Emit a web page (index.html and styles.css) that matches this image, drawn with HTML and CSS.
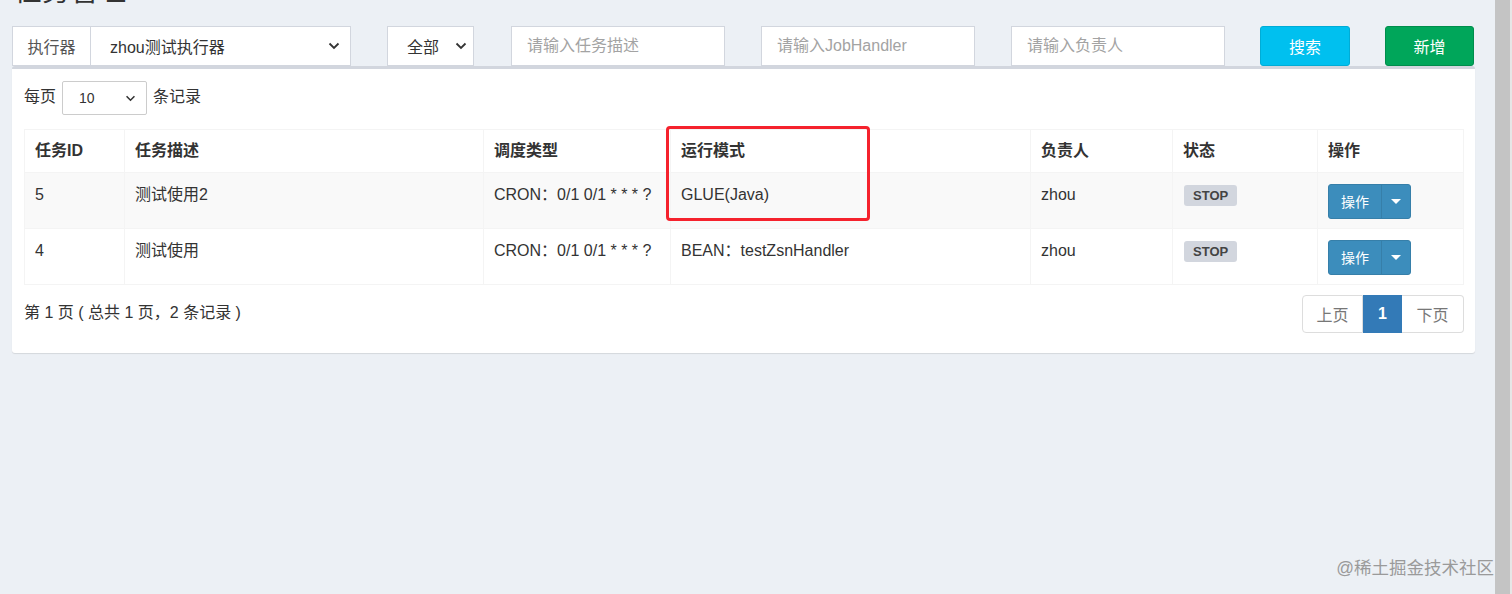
FILE: index.html
```html
<!DOCTYPE html>
<html lang="zh-CN">
<head>
    <meta charset="UTF-8">
    <meta name="viewport" content="width=device-width, initial-scale=1.0">
    <title>任务管理</title>
    <link rel="stylesheet" href="styles.css">
</head>
<body>
    <div class="page">
        <div class="content">
            <h1 class="page-title">任务管理</h1>

            <div class="filters">
                <div class="group">
                    <span class="addon">执行器</span>
                    <div class="select select-group">
                        <span>zhou测试执行器</span>
                        <svg width="12" height="8" viewBox="0 0 12 8"><path d="M1.5 1.5 6 6l4.5-4.5" fill="none" stroke="#333" stroke-width="1.8"/></svg>
                    </div>
                </div>
                <div class="select select-status">
                    <span>全部</span>
                    <svg width="12" height="8" viewBox="0 0 12 8"><path d="M1.5 1.5 6 6l4.5-4.5" fill="none" stroke="#333" stroke-width="1.8"/></svg>
                </div>
                <input class="field" type="text" placeholder="请输入任务描述">
                <input class="field" type="text" placeholder="请输入JobHandler">
                <input class="field" type="text" placeholder="请输入负责人">
                <button class="btn btn-info">搜索</button>
                <button class="btn btn-success">新增</button>
            </div>

            <div class="box">
                <div class="length">
                    <span>每页</span>
                    <div class="select select-small">
                        <span>10</span>
                        <svg width="11" height="7" viewBox="0 0 12 8"><path d="M1.5 1.5 6 6l4.5-4.5" fill="none" stroke="#333" stroke-width="1.8"/></svg>
                    </div>
                    <span>条记录</span>
                </div>

                <div class="table-wrap">
                    <table class="jobs">
                        <colgroup>
                            <col style="width:100px">
                            <col style="width:359px">
                            <col style="width:187px">
                            <col style="width:360px">
                            <col style="width:142px">
                            <col style="width:145px">
                            <col style="width:146px">
                        </colgroup>
                        <thead>
                            <tr>
                                <th>任务ID</th>
                                <th>任务描述</th>
                                <th>调度类型</th>
                                <th>运行模式</th>
                                <th>负责人</th>
                                <th>状态</th>
                                <th>操作</th>
                            </tr>
                        </thead>
                        <tbody>
                            <tr>
                                <td>5</td>
                                <td>测试使用2</td>
                                <td>CRON：0/1 0/1 * * * ?</td>
                                <td>GLUE(Java)</td>
                                <td>zhou</td>
                                <td><span class="label">STOP</span></td>
                                <td>
                                    <div class="btn-group">
                                        <span class="op">操作</span>
                                        <span class="caret-btn"><i class="caret"></i></span>
                                    </div>
                                </td>
                            </tr>
                            <tr>
                                <td>4</td>
                                <td>测试使用</td>
                                <td>CRON：0/1 0/1 * * * ?</td>
                                <td>BEAN：testZsnHandler</td>
                                <td>zhou</td>
                                <td><span class="label">STOP</span></td>
                                <td>
                                    <div class="btn-group">
                                        <span class="op">操作</span>
                                        <span class="caret-btn"><i class="caret"></i></span>
                                    </div>
                                </td>
                            </tr>
                        </tbody>
                    </table>
                    <!-- 标注框 -->
                    <div class="highlight"></div>
                </div>

                <div class="box-footer">
                    <span>第 1 页 ( 总共 1 页，2 条记录 )</span>
                    <ul class="pagination">
                        <li class="disabled">上页</li>
                        <li class="active">1</li>
                        <li class="disabled">下页</li>
                    </ul>
                </div>
            </div>
        </div>
        <div class="watermark">@稀土掘金技术社区</div>
    </div>
    <div class="scrollbar"></div>
</body>
</html>
```

FILE: styles.css
```css
html, body {
    height: 100%;
}
body {
    margin: 0;
    display: flex;
    background: #ecf0f5;
    font-family: "Liberation Sans", "Noto Sans CJK SC", sans-serif;
    font-size: 16px;
    color: #333;
    overflow: hidden;
}
.page {
    flex: 1;
    position: relative;
}
.content {
    padding: 0 20px 0 12px;
}
.page-title {
    margin: -22px 0 0 2px;
    font-size: 28px;
    line-height: 28px;
    font-weight: normal;
    color: #333;
}
.filters {
    display: flex;
    margin-top: 20px;
    height: 40px;
}
.group {
    display: flex;
    width: 339px;
}
.addon {
    width: 78px;
    box-sizing: border-box;
    border: 1px solid #d2d6de;
    border-right: none;
    background: #fff;
    display: flex;
    align-items: center;
    justify-content: center;
    color: #555;
}
.select {
    box-sizing: border-box;
    border: 1px solid #d2d6de;
    background: #fff;
    display: flex;
    align-items: center;
    justify-content: space-between;
    color: #333;
}
.select-group {
    flex: 1;
    padding: 0 10px 0 19px;
}
.select-status {
    width: 87px;
    margin-left: 36px;
    padding: 0 6px 0 19px;
}
.field {
    width: 214px;
    box-sizing: border-box;
    margin-left: 37px;
    border: 1px solid #d2d6de;
    padding: 0 15px;
    font: inherit;
    color: #555;
    outline: none;
}
.field + .field {
    margin-left: 36px;
}
.field::placeholder {
    color: #a3a3a3;
}
.btn {
    width: 90px;
    margin-left: 35px;
    border-radius: 3px;
    font: inherit;
    color: #fff;
}
.btn-info {
    background: #00c0ef;
    border: 1px solid #00acd6;
}
.btn-success {
    width: 89px;
    background: #00a65a;
    border: 1px solid #008d4c;
}
.box {
    background: #fff;
    border-top: 3px solid #d2d6de;
    border-radius: 3px;
    box-shadow: 0 1px 1px rgba(0, 0, 0, 0.1);
    padding: 12px 11px 20px 12px;
}
.length {
    display: flex;
    align-items: center;
    gap: 6px;
    line-height: 20px;
}
.length > span {
    margin-top: -2px;
}
.select-small {
    width: 85px;
    height: 34px;
    padding: 0 10px 0 16px;
    font-size: 14px;
    border-color: #ccc;
    border-radius: 2px;
}
.table-wrap {
    position: relative;
    margin-top: 14px;
}
.jobs {
    width: 100%;
    table-layout: fixed;
    border-collapse: collapse;
    border: 1px solid #f4f4f4;
}
.jobs th, .jobs td {
    border: 1px solid #f4f4f4;
    text-align: left;
    line-height: 22px;
}
.jobs th {
    padding: 10px 10px;
    font-weight: bold;
    color: #333;
}
.jobs td {
    padding: 11px 10px 9px;
    vertical-align: top;
    height: 35px;
    box-sizing: content-box;
}
.jobs tbody tr:nth-child(odd) {
    background: #f9f9f9;
}
.label {
    display: inline-block;
    margin: 1px 0 0 1px;
    padding: 4px 9px 4px;
    font-size: 13px;
    line-height: 13px;
    font-weight: bold;
    color: #444;
    background: #d2d6de;
    border-radius: 3px;
}
.btn-group {
    display: inline-flex;
    height: 35px;
    background: #3c8dbc;
    border: 1px solid #367fa9;
    border-radius: 3px;
    box-sizing: border-box;
    color: #fff;
    font-size: 14px;
}
.op {
    width: 52px;
    display: flex;
    align-items: center;
    justify-content: center;
    border-right: 1px solid #367fa9;
}
.caret-btn {
    width: 28px;
    display: flex;
    align-items: center;
    justify-content: center;
}
.caret {
    width: 0;
    height: 0;
    border-top: 5px solid #fff;
    border-left: 5px solid transparent;
    border-right: 5px solid transparent;
}
.highlight {
    position: absolute;
    left: 642px;
    top: -3px;
    width: 198px;
    height: 89px;
    border: 3px solid #f5222d;
    border-radius: 4px;
}
.box-footer {
    display: flex;
    justify-content: space-between;
    align-items: flex-start;
    margin-top: 10px;
}
.box-footer span {
    margin-top: 4px;
}
.pagination {
    display: flex;
    list-style: none;
    margin: 0;
    padding: 0;
}
.pagination li {
    height: 38px;
    box-sizing: border-box;
    padding: 0;
    display: flex;
    align-items: center;
    justify-content: center;
    border: 1px solid #ddd;
    color: #777;
    background: #fff;
    white-space: nowrap;
}
.pagination li:first-child {
    border-radius: 4px 0 0 4px;
    width: 61px;
}
.pagination li:last-child {
    border-radius: 0 4px 4px 0;
    border-left: none;
    width: 62px;
}
.pagination li.active {
    width: 39px;
    background: #337ab7;
    border-color: #337ab7;
    color: #fff;
    font-weight: bold;
}
.watermark {
    position: absolute;
    right: 1px;
    top: 554px;
    font-size: 17.5px;
    color: #9a9a9a;
}
.scrollbar {
    width: 18px;
    flex: none;
    background: #c4c4c4;
    border-right: 3px solid #e6e6e6;
    box-sizing: border-box;
}
```
